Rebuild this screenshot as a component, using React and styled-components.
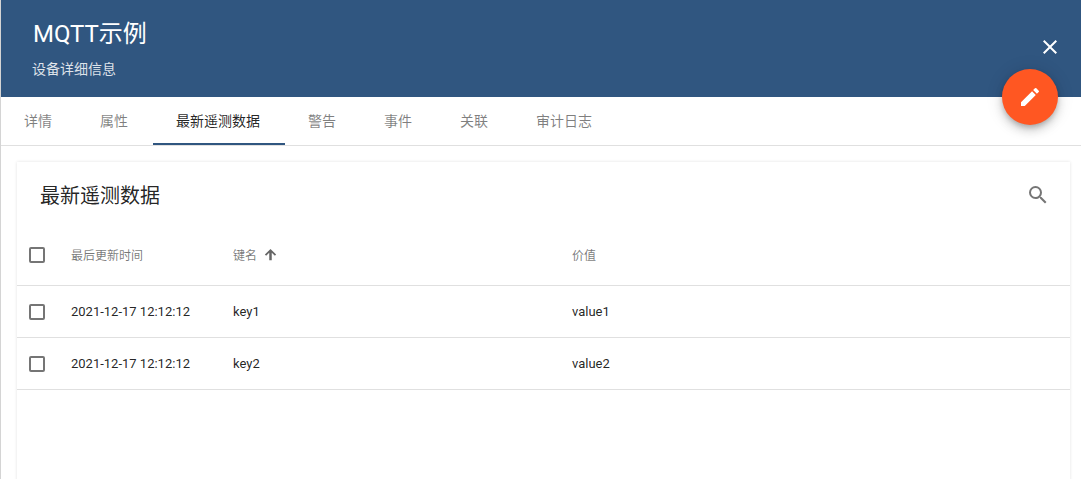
import React from 'react';
import styled, { createGlobalStyle } from 'styled-components';

const tabs = ['详情', '属性', '最新遥测数据', '警告', '事件', '关联', '审计日志'];
const rows = [
    { ts: '2021-12-17 12:12:12', key: 'key1', value: 'value1' },
    { ts: '2021-12-17 12:12:12', key: 'key2', value: 'value2' },
];

function App() {
    return (
        <Page>
            <GlobalStyle />
            <Header>
                <Title>MQTT示例</Title>
                <Subtitle>设备详细信息</Subtitle>
                <CloseBtn aria-label="close">
                    <svg width="24" height="24" viewBox="0 0 24 24" fill="currentColor">
                        <path d="M19 6.41 17.59 5 12 10.59 6.41 5 5 6.41 10.59 12 5 17.59 6.41 19 12 13.41 17.59 19 19 17.59 13.41 12z" />
                    </svg>
                </CloseBtn>
                <Fab aria-label="edit">
                    <svg width="24" height="24" viewBox="0 0 24 24" fill="currentColor">
                        <path d="M3 17.25V21h3.75L17.81 9.94l-3.75-3.75L3 17.25zM20.71 7.04a1 1 0 0 0 0-1.41l-2.34-2.34a1 1 0 0 0-1.41 0l-1.83 1.83 3.75 3.75 1.83-1.83z" />
                    </svg>
                </Fab>
            </Header>
            <TabBar>
                {tabs.map((tab, index) => (
                    <Tab key={tab} active={index === 2}>
                        {tab}
                    </Tab>
                ))}
            </TabBar>
            <Content>
                <Card>
                    <CardHeader>
                        <CardTitle>最新遥测数据</CardTitle>
                        <SearchBtn aria-label="search">
                            <svg width="24" height="24" viewBox="0 0 24 24" fill="currentColor">
                                <path d="M15.5 14h-.79l-.28-.27A6.47 6.47 0 0 0 16 9.5 6.5 6.5 0 1 0 9.5 16c1.61 0 3.09-.59 4.23-1.57l.27.28v.79l5 4.99L20.49 19l-4.99-5zm-6 0C7.01 14 5 11.99 5 9.5S7.01 5 9.5 5 14 7.01 14 9.5 11.99 14 9.5 14z" />
                            </svg>
                        </SearchBtn>
                    </CardHeader>
                    <HeadRow>
                        <Check />
                        <TimeCell>最后更新时间</TimeCell>
                        <KeyCell>
                            键名
                            <SortIcon width="15" height="15" viewBox="0 0 24 24" fill="currentColor">
                                <path d="M3 12l2 2 5-5v12h4V9l5 5 2-2-9-9-9 9z" />
                            </SortIcon>
                        </KeyCell>
                        <div>价值</div>
                    </HeadRow>
                    {rows.map((row) => (
                        <Row key={row.key}>
                            <Check />
                            <TimeCell>{row.ts}</TimeCell>
                            <KeyCell>{row.key}</KeyCell>
                            <div>{row.value}</div>
                        </Row>
                    ))}
                </Card>
            </Content>
        </Page>
    );
}

export default App;

const GlobalStyle = createGlobalStyle`
    html, body {
        margin: 0;
        padding: 0;
        height: 100%;
        overflow: hidden;
        background: #fff;
    }
    body {
        font-family: Roboto, "Noto Sans CJK SC", sans-serif;
    }
`;

const Page = styled.div`
    width: 1081px;
    height: 479px;
    box-sizing: border-box;
    border-left: 1px solid #d4d4d4;
    overflow: hidden;
`;

const Header = styled.header`
    position: relative;
    height: 97px;
    box-sizing: border-box;
    padding: 16px 32px 0;
    background: #305680;
    color: #fff;
`;

const Title = styled.div`
    font-size: 24px;
    line-height: 36px;
`;

const Subtitle = styled.div`
    margin: 7px 0 0 -1px;
    font-size: 14px;
    line-height: 20px;
    color: rgba(255, 255, 255, 0.85);
`;

const CloseBtn = styled.div`
    position: absolute;
    top: 35px;
    right: 19px;
    width: 24px;
    height: 24px;
`;

const Fab = styled.div`
    position: absolute;
    top: 69px;
    left: 1001px;
    z-index: 2;
    width: 56px;
    height: 56px;
    display: flex;
    align-items: center;
    justify-content: center;
    border-radius: 50%;
    background: #ff5722;
    color: #fff;
    box-shadow: 0 3px 5px -1px rgba(0, 0, 0, 0.2), 0 6px 10px 0 rgba(0, 0, 0, 0.14), 0 1px 18px 0 rgba(0, 0, 0, 0.12);
`;

const TabBar = styled.nav`
    display: flex;
    height: 49px;
    box-sizing: border-box;
    border-bottom: 1px solid #e0e0e0;
`;

const Tab = styled.div`
    height: 48px;
    box-sizing: border-box;
    padding: 0 25px 0 23px;
    display: flex;
    align-items: center;
    font-size: 14px;
    color: ${(props) => (props.active ? 'rgba(0, 0, 0, 0.87)' : 'rgba(0, 0, 0, 0.5)')};
    border-bottom: 2px solid ${(props) => (props.active ? '#305680' : 'transparent')};
`;

const Content = styled.div`
    padding: 16px 11px 0 16px;
`;

const Card = styled.section`
    height: 330px;
    background: #fff;
    box-shadow: 0 0 3px rgba(0, 0, 0, 0.12);
`;

const CardHeader = styled.div`
    height: 64px;
    box-sizing: border-box;
    padding: 1px 10px 0 23px;
    display: flex;
    align-items: center;
    justify-content: space-between;
`;

const CardTitle = styled.div`
    font-size: 20px;
    color: rgba(0, 0, 0, 0.87);
`;

const SearchBtn = styled.div`
    width: 24px;
    height: 24px;
    margin-right: 10px;
    color: rgba(0, 0, 0, 0.54);
`;

const Row = styled.div`
    display: grid;
    grid-template-columns: 54px 162px 339px 1fr;
    align-items: center;
    height: 52px;
    box-sizing: border-box;
    border-bottom: 1px solid #e0e0e0;
    font-size: 13px;
    color: rgba(0, 0, 0, 0.87);
`;

const HeadRow = styled(Row)`
    height: 60px;
    padding-bottom: 2px;
    font-size: 12px;
    color: rgba(0, 0, 0, 0.54);
`;

const Check = styled.span`
    display: block;
    width: 12px;
    height: 12px;
    margin-left: 12px;
    border: 2px solid rgba(0, 0, 0, 0.54);
    border-radius: 2px;
`;

const TimeCell = styled.div`
    white-space: nowrap;
`;

const KeyCell = styled.div`
    display: flex;
    align-items: center;
    gap: 2px;
`;

const SortIcon = styled.svg`
    margin-left: 4px;
    color: rgba(0, 0, 0, 0.6);
`;
